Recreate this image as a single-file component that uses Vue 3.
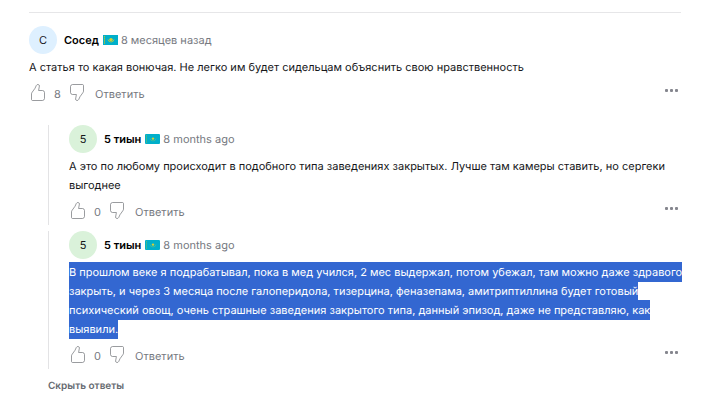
<script setup>
import { h } from 'vue'

const root = {
  letter: 'С', tone: 'blue', name: 'Сосед', time: '8 месяцев назад', votes: 8,
  text: 'А статья то какая вонючая. Не легко им будет сидельцам объяснить свою нравственность',
}
const replies = [
  {
    letter: '5', tone: 'green', name: '5 тиын', time: '8 months ago', votes: 0,
    text: 'А это по любому происходит в подобного типа заведениях закрытых. Лучше там камеры ставить, но сергеки выгоднее',
  },
  {
    letter: '5', tone: 'green', name: '5 тиын', time: '8 months ago', votes: 0, selected: true,
    text: 'В прошлом веке я подрабатывал, пока в мед учился, 2 мес выдержал, потом убежал, там можно даже здравого закрыть, и через 3 месяца после галоперидола, тизерцина, феназепама, амитриптиллина будет готовый психический овощ, очень страшные заведения закрытого типа, данный эпизод, даже не представляю, как выявили.',
  },
]

const Flag = (props) =>
  h('svg', { viewBox: '0 0 15 10', role: 'img', 'aria-label': 'KZ' }, [
    h('rect', { width: 15, height: 10, rx: props.square ? 0 : 1, fill: '#00afca' }),
    h('path', { d: 'M1.5 1v8', stroke: '#a8c43c', 'stroke-width': 1, 'stroke-dasharray': '1.5 .6', opacity: props.square ? 1 : 0.5 }),
    h('circle', { cx: 8, cy: 4.6, r: props.square ? 1.7 : 1.2, fill: '#d8cf34' }),
    h('path', { d: 'M5 4.5Q5.3 6.8 8 7Q10.7 6.8 11 4.5', fill: 'none', stroke: '#c5cc3a', 'stroke-width': 0.8, opacity: props.square ? 1 : 0.4 }),
  ])
Flag.props = ['square']

const Thumb = () =>
  h('svg', { viewBox: '0 0 14 17', 'aria-hidden': 'true' }, [
    h('path', {
      d: 'M.5 15.5V9.8Q.5 9 1.2 8.2L4 4.3L5.3 1.5Q6 .3 7.2.5Q8.5.8 8.4 2L7.6 6.5H11.5Q13.5 6.7 13.5 8.5V14.5Q13.3 16.4 11.5 16.5H1.5Q.6 16.4.5 15.5Z',
      fill: 'none', stroke: '#6f7176', 'stroke-width': 0.7, 'stroke-linejoin': 'round',
    }),
  ])

const Comment = (props) => {
  const c = props.item
  return h('article', { class: 'comment' }, [
    h('header', { class: 'head' }, [
      h('span', { class: ['avatar', c.tone] }, c.letter),
      h('strong', { class: 'name' }, c.name),
      h(Flag, { class: 'flag', square: c.tone === 'blue' }),
      h('time', { class: 'time' }, c.time),
    ]),
    h('p', { class: 'text' }, c.selected ? [h('mark', c.text)] : c.text),
    h('footer', { class: 'actions' }, [
      h('button', { class: 'vote', type: 'button', 'aria-label': '+1' }, [h(Thumb)]),
      h('span', { class: 'count' }, c.votes),
      h('button', { class: 'vote down', type: 'button', 'aria-label': '-1' }, [h(Thumb)]),
      h('button', { class: 'answer', type: 'button' }, 'Ответить'),
      h('button', { class: 'more', type: 'button', 'aria-label': '…' }, [h('i'), h('i'), h('i')]),
    ]),
  ])
}
Comment.props = ['item']
</script>

<template>
  <main class="page">
    <section class="thread">
      <Comment :item="root" />
      <div class="replies">
        <div v-for="(reply, i) in replies" :key="i" class="reply">
          <Comment :item="reply" />
        </div>
      </div>
      <button class="hide" type="button">Скрыть ответы</button>
    </section>
  </main>
</template>

<style>
body {
  background: #fff;
}
</style>

<style scoped>
.page {
  padding: 12px 25px 0 29px;
  font-family: Inter, "Liberation Sans", sans-serif;
  font-size: 11px;
  line-height: 19px;
  text-rendering: geometricPrecision;
  color: #16171a;
}
.page :deep(button) {
  padding: 0;
  border: 0;
  background: none;
  font: inherit;
  text-rendering: inherit;
  color: #76797f;
  cursor: pointer;
}
.thread {
  border-top: 1px solid #e6e6e8;
  padding-top: 13px;
}
.thread :deep(.head) {
  display: flex;
  align-items: center;
}
.thread :deep(.avatar) {
  width: 28px;
  height: 28px;
  line-height: 28px;
  border-radius: 50%;
  text-align: center;
}
.thread :deep(.blue) {
  background: #def0ff;
}
.thread :deep(.green) {
  background: #daf2da;
}
.thread :deep(.name) {
  margin-left: 7px;
  font-weight: 600;
  color: #000;
}
.thread :deep(.flag) {
  width: 15px;
  height: 10px;
  margin: 0 3px 0 4px;
}
.thread :deep(.time) {
  color: #76797f;
}
.thread :deep(.text) {
  margin: 4px -6px 0 0;
}
.thread :deep(mark) {
  padding: 3px 0;
  background: #3367d1;
  color: #fff;
  -webkit-box-decoration-break: clone;
  box-decoration-break: clone;
}
.thread :deep(.actions) {
  display: flex;
  align-items: center;
  height: 20px;
  margin-top: 7px;
  padding: 0 3px 3px 2px;
  color: #76797f;
}
.thread :deep(.vote),
.thread :deep(.vote svg) {
  display: block;
  width: 14px;
  height: 17px;
}
.thread :deep(.vote) {
  margin-bottom: 3px;
}
.thread :deep(.down) {
  transform: rotate(180deg);
}
.thread :deep(.count) {
  width: 25px;
  text-align: center;
}
.thread :deep(.actions .answer) {
  margin-left: 11px;
}
.thread :deep(.more) {
  display: flex;
  gap: 2px;
  margin-left: auto;
  padding-bottom: 8px;
}
.thread :deep(.more i) {
  width: 3px;
  height: 3px;
  border-radius: 1px;
  background: #85868e;
}
.replies {
  display: flex;
  flex-direction: column;
  gap: 6px;
  margin: 18px 0 0 19px;
}
.reply {
  padding-left: 20px;
  border-left: 1px solid #e3e3e5;
}
.page .hide {
  display: block;
  margin: 8px 0 0 19px;
  font-size: 10px;
  font-weight: 600;
  color: #666a70;
}
</style>
